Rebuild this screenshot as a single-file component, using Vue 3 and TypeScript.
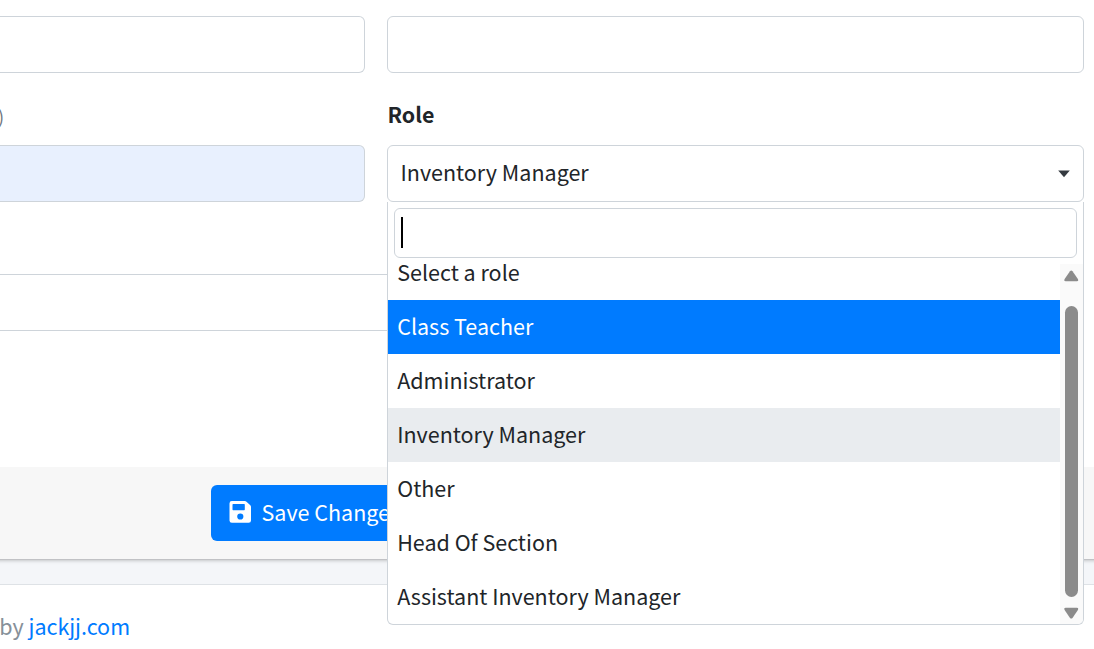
<script setup lang="ts">
import { ref } from 'vue'

const roles: string[] = [
  'Select a role',
  'Class Teacher',
  'Administrator',
  'Inventory Manager',
  'Other',
  'Head Of Section',
  'Assistant Inventory Manager',
]
const selected = ref('Inventory Manager')
const highlighted = ref('Class Teacher')
</script>

<template>
  <div class="page">
    <section class="card">
      <div class="card-body">
        <div class="row">
          <div class="control cut"></div>
          <div class="control"></div>
        </div>
        <div class="row labels">
          <div class="hint">)</div>
          <label class="label">Role</label>
        </div>
        <div class="row">
          <div class="control cut filled"></div>
          <div class="select-wrap">
            <div class="control select">
              <span>{{ selected }}</span>
              <svg class="caret" width="12" height="8" viewBox="0 0 12 8"><path d="M0.2 0.5H11.8L6 7.2Z" fill="#343a40" /></svg>
            </div>
            <div class="dropdown">
              <div class="search"><i class="cursor"></i></div>
              <div class="results">
                <ul class="options">
                  <li
                    v-for="role in roles"
                    :key="role"
                    :class="{ active: role === highlighted, chosen: role === selected }"
                    @mouseenter="highlighted = role"
                    @click="selected = role"
                  >{{ role }}</li>
                </ul>
                <div class="scrollbar">
                  <svg width="15" height="12" viewBox="0 0 15 12"><path d="M6 1.2Q7.25-.2 8.5 1.2L13.9 9Q14.9 11.3 12.8 11.3H1.7Q-.4 11.3.6 9Z" fill="#8b8b8b" /></svg>
                  <div class="thumb"></div>
                  <svg width="15" height="12" viewBox="0 0 15 12"><path d="M6 10.9Q7.25 12.3 8.5 10.9L13.9 3.1Q14.9.8 12.8.8H1.7Q-.4.8.6 3.1Z" fill="#8b8b8b" /></svg>
                </div>
              </div>
            </div>
          </div>
        </div>
        <div class="file-row"></div>
      </div>
      <div class="card-footer">
        <button class="save" type="button">
          <svg width="22" height="22" viewBox="0 0 22 22">
            <path fill="#fff" fill-rule="evenodd" d="M2.9 0H15.8Q16.8 0 17.5.7L21.3 4.3Q22 5 22 6V19.4Q22 21.8 19.6 21.8H2.9Q.5 21.8.5 19.4V2.4Q.5 0 2.9 0ZM4.1 3.1Q3.5 3.1 3.5 3.7V8.6Q3.5 9.2 4.1 9.2H15.2Q15.8 9.2 15.8 8.6V3.7Q15.8 3.1 15.2 3.1ZM11.3 12.4A3.1 3.1 0 1 0 11.3 18.6A3.1 3.1 0 1 0 11.3 12.4Z" />
          </svg>
          <span>Save Changes</span>
        </button>
      </div>
    </section>
    <footer class="footer">by <a>jackjj.com</a></footer>
  </div>
</template>

<style>
body {
  margin: 0;
  overflow: hidden;
}
</style>

<style scoped>
* {
  box-sizing: border-box;
}
.page {
  width: 1094px;
  height: 649px;
  overflow: hidden;
  background: #f4f6f9;
  color: #212529;
  font-family: 'Noto Sans CJK JP', 'Noto Sans CJK SC', sans-serif;
  font-size: 21.5px;
  line-height: 36px;
}
.card {
  height: 559px;
  margin: 0 -12px;
  background: #fff;
  box-shadow: 0 0 1px rgba(0, 0, 0, 0.2), 0 1px 4px rgba(0, 0, 0, 0.3);
}
.card-body {
  height: 467px;
  padding: 16px 22px 0 12px;
}
.row {
  display: grid;
  grid-template-columns: 365px 697px;
  column-gap: 22px;
}
.control {
  height: 57px;
  border: 1px solid #ced4da;
  border-radius: 6px;
  background: #fff;
}
.cut {
  border-left: 0;
  border-radius: 0 6px 6px 0;
}
.filled {
  background: #e8f0fe;
}
.labels {
  height: 72px;
  padding-top: 23px;
}
.hint {
  margin-left: -2px;
  padding-top: 2px;
  color: #6c757d;
  font-size: 18px;
}
.label {
  padding-left: 0.5px;
  font-size: 21.4px;
  font-weight: 700;
}
.select-wrap {
  position: relative;
}
.select {
  display: flex;
  align-items: center;
  justify-content: space-between;
  padding: 0 13px 0 12.5px;
}
.select span {
  padding-bottom: 4px;
}
.dropdown {
  position: absolute;
  z-index: 2;
  top: 57px;
  left: 0;
  width: 697px;
  height: 423px;
  padding-top: 6px;
  border: 1px solid #ced4da;
  border-top: 0;
  border-radius: 0 0 6px 6px;
  background: #fff;
  overflow: hidden;
}
.search {
  display: flex;
  align-items: center;
  height: 50px;
  margin: 0 6px;
  padding: 0 0 1px 6px;
  border: 1px solid #ced4da;
  border-radius: 6px;
}
.cursor {
  width: 2px;
  height: 31px;
  background: #000;
}
.results {
  display: flex;
  height: 360px;
  margin-top: 6px;
}
.options {
  display: flex;
  flex: 1;
  flex-direction: column;
  justify-content: flex-end;
  margin: 0;
  padding: 0;
  list-style: none;
  overflow: hidden;
}
.options li {
  flex: none;
  height: 54px;
  padding: 8px 9px 10px 9.2px;
}
.options .chosen {
  background: #e9ecef;
}
.options .active {
  background: #007bff;
  color: #fff;
}
.scrollbar {
  display: flex;
  flex-direction: column;
  align-items: center;
  width: 23px;
  padding: 6px 0 5px;
  background: #fafafa;
}
.thumb {
  width: 13px;
  height: 291px;
  margin: 24px 0 10px;
  border-radius: 7px;
  background: #8b8b8b;
}
.file-row {
  height: 57px;
  margin-top: 72px;
  border: solid #ced4da;
  border-width: 1px 0;
}
.card-footer {
  height: 92px;
  padding: 18px 0 0 223px;
  background: #f7f7f7;
}
.save {
  display: flex;
  align-items: center;
  gap: 10.5px;
  height: 56px;
  padding: 0 18px;
  border: 0;
  border-radius: 6px;
  background: #007bff;
  color: #fff;
  font: inherit;
}
.save svg {
  margin-top: -2px;
}
.save span {
  padding-bottom: 2px;
}
.footer {
  height: 65px;
  margin-top: 25px;
  padding-top: 23px;
  border-top: 1px solid #dee2e6;
  background: #fff;
  color: #869099;
  text-indent: -0.7px;
}
.footer a {
  color: #007bff;
}
</style>
